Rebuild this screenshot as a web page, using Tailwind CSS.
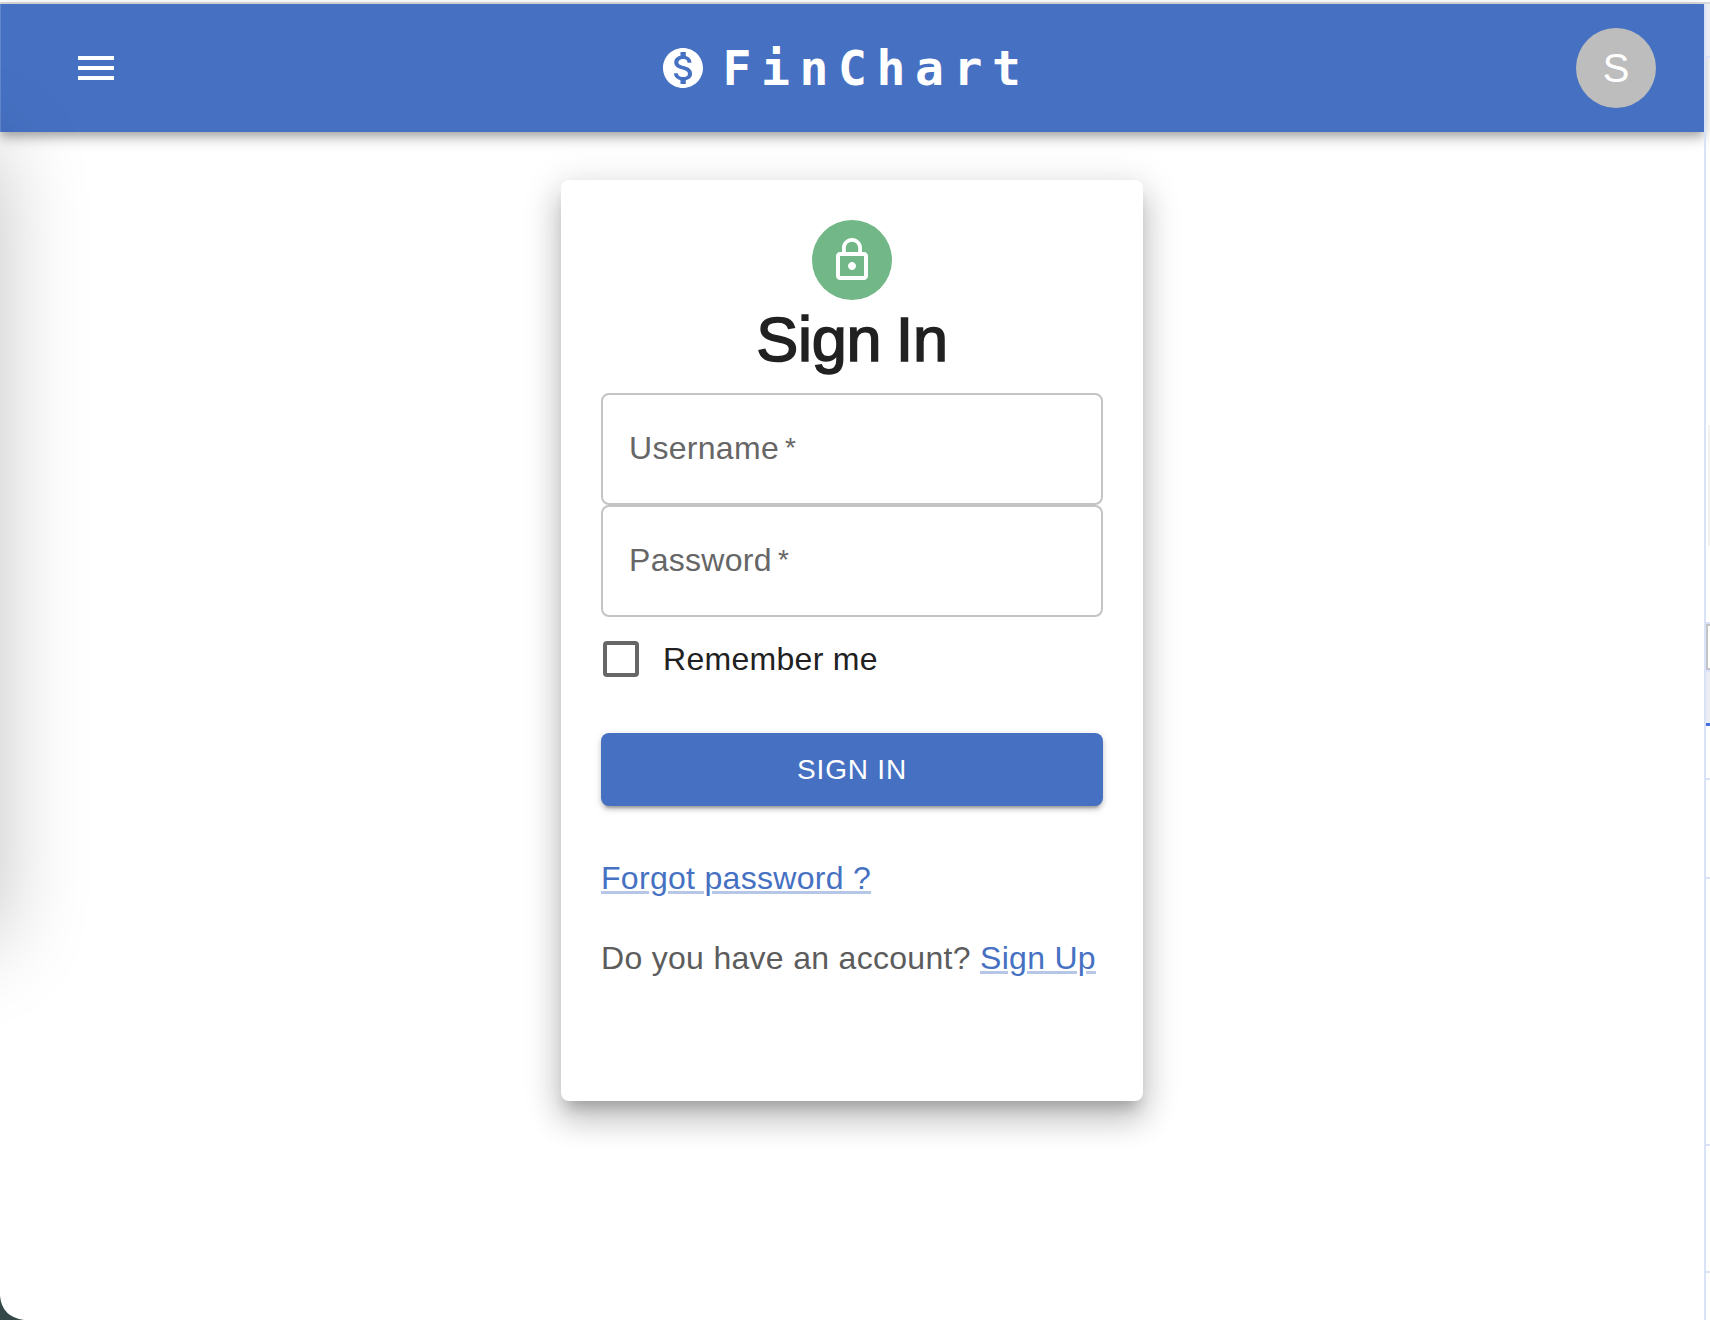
<!DOCTYPE html>
<html lang="en">
<head>
<meta charset="utf-8">
<title>FinChart</title>
<script src="https://cdn.jsdelivr.net/npm/@tailwindcss/browser@4"></script>
</head>
<body class="relative h-[1320px] w-[1710px] overflow-hidden bg-white font-['Liberation_Sans',sans-serif] text-[32px] leading-[48px] tracking-[0.3px] text-[#212121]">
<div class="flex h-full flex-col">
  <div class="mt-[2px] h-[2px] shrink-0 bg-[#dcdcde]"></div>
  <div class="flex min-h-0 flex-1">
    <div class="flex w-[1704px] shrink-0 flex-col items-center">
      <header class="grid h-32 w-full shrink-0 grid-cols-[1fr_auto_1fr] items-center bg-[#4671c3] pr-12 pl-[72px] text-white shadow-[0_4px_8px_-2px_rgba(0,0,0,0.2),0_8px_10px_rgba(0,0,0,0.14),0_2px_20px_rgba(0,0,0,0.12)]">
        <button class="size-12" aria-label="menu">
          <svg class="size-12" viewBox="0 0 24 24" fill="currentColor"><path d="M3 18h18v-2H3v2zm0-5h18v-2H3v2zm0-7v2h18V6H3z"/></svg>
        </button>
        <div class="mr-[39px] flex items-center">
          <svg class="mr-4 size-12" viewBox="0 0 24 24" fill="currentColor"><path d="M12 2C6.48 2 2 6.48 2 12s4.48 10 10 10 10-4.480 10-10S17.520 2 12 2zm1.410 16.090V20h-2.670v-1.930c-1.710-.36-3.160-1.460-3.270-3.400h1.960c.1 1.050.82 1.870 2.650 1.870 1.960 0 2.400-.98 2.400-1.590 0-.83-.44-1.610-2.670-2.140-2.480-.6-4.180-1.620-4.180-3.670 0-1.720 1.390-2.840 3.110-3.210V4h2.670v1.950c1.860.45 2.790 1.860 2.850 3.390H14.300c-.05-1.110-.64-1.870-2.220-1.870-1.500 0-2.400.68-2.400 1.640 0 .84.65 1.390 2.670 1.910s4.180 1.390 4.180 3.910c-.01 1.830-1.380 2.830-3.120 3.160z"/></svg>
          <span class="font-['DejaVu_Sans_Mono',monospace] text-[48px] leading-[64px] font-bold tracking-[9.6px]">FinChart</span>
        </div>
        <div class="flex size-20 items-center justify-center justify-self-end rounded-full bg-[#bdbdbd] text-[40px] tracking-normal">S</div>
      </header>
      <main class="mt-12 flex h-[921px] w-[582px] shrink-0 flex-col items-center rounded-lg bg-white p-10 shadow-[0_12px_14px_-6px_rgba(0,0,0,0.2),0_20px_30px_2px_rgba(0,0,0,0.14),0_8px_36px_6px_rgba(0,0,0,0.12)]">
        <div class="flex size-20 shrink-0 items-center justify-center rounded-full bg-[#71b787] text-white">
          <svg class="size-12" viewBox="0 0 24 24" fill="currentColor"><path d="M12 17c1.100 0 2-.9 2-2s-.9-2-2-2-2 .9-2 2 .9 2 2 2zm6-9h-1V6c0-2.760-2.240-5-5-5S7 3.240 7 6v2H6c-1.100 0-2 .9-2 2v10c0 1.100.9 2 2 2h12c1.100 0 2-.9 2-2V10c0-1.100-.9-2-2-2zM8.900 6c0-1.710 1.390-3.100 3.100-3.100s3.100 1.390 3.100 3.100v2H8.900V6zM18 20H6V10h12v10z"/></svg>
        </div>
        <h1 class="h-[93px] text-[63px] leading-[78px] tracking-[-0.2px] [word-spacing:-3px] [-webkit-text-stroke:1.6px_#212121]">Sign In</h1>
        <div class="flex h-28 w-full items-center rounded-lg border-2 border-[#c4c4c4] px-[26px] pb-[2px] text-[#666]">Username<span class="ml-[6px] text-[28px]">*</span></div>
        <div class="flex h-28 w-full items-center rounded-lg border-2 border-[#c4c4c4] px-[26px] pb-[2px] text-[#666]">Password<span class="ml-[6px] text-[28px]">*</span></div>
        <label class="mt-[18px] flex h-[48px] w-full items-center">
          <span class="mr-6 ml-[2px] size-9 rounded-[4px] border-4 border-[#666]"></span>Remember me
        </label>
        <button class="mt-[50px] h-[73px] w-full shrink-0 rounded-lg bg-[#4671c3] text-[28px] tracking-[0.8px] text-white shadow-[0_6px_2px_-4px_rgba(0,0,0,0.2),0_4px_4px_rgba(0,0,0,0.14),0_2px_10px_rgba(0,0,0,0.12)]">SIGN IN</button>
        <p class="mt-12 w-full"><a class="text-[#4671c3] underline decoration-[#b5c6e7] decoration-3 underline-offset-2">Forgot password ?</a></p>
        <p class="mt-8 w-full whitespace-nowrap text-[#5c5c5c]">Do you have an account? <a class="text-[#4671c3] underline decoration-[#b5c6e7] decoration-3 underline-offset-2">Sign Up</a></p>
      </main>
    </div>
    <aside class="flex flex-1 flex-col border-l-2 border-[#dae2f8]">
      <div class="h-[54px] border-b-2 border-[#dae2f8] bg-[#ebedf4]"></div>
      <div class="flex h-[566px] justify-end border-b-2 border-[#dae2f8] pt-[367px]">
        <div class="h-[121px] w-[2px] bg-[#f1f1f1]"></div>
      </div>
      <div class="h-[46px] border-y-2 border-l-2 border-[#c4c4c6]"></div>
      <div class="h-[53px] border-t-2 border-[#dae2f8] bg-[#ebedf4]"></div>
      <div class="h-[3px] bg-[#466ee0]"></div>
      <div class="h-[54px] border-b-2 border-[#dae2f8]"></div>
      <div class="h-[99px] border-b-2 border-[#dae2f8]"></div>
      <div class="h-[267px] border-b-2 border-[#dae2f8]"></div>
      <div class="h-[127px] border-b-2 border-[#dae2f8]"></div>
    </aside>
  </div>
</div>
<div class="absolute top-[150px] -left-[202px] h-[790px] w-[200px] shadow-[0_0_88px_rgba(0,0,0,0.25)]"></div>
<div class="absolute top-1 left-0 h-32 w-px bg-white/15"></div>
<svg class="absolute bottom-0 left-0 h-6 w-6" viewBox="0 0 24 24"><path d="M0 0Q2 21 24 24H0z" fill="#344849"/></svg>
</body>
</html>
